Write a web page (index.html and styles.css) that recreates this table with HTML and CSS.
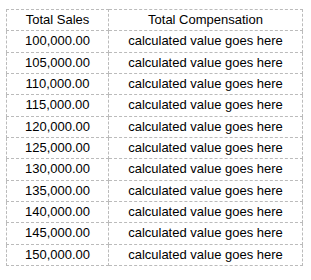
FILE: index.html
```html
<!DOCTYPE html>
<html>
<head>
<meta charset="utf-8">
<link rel="stylesheet" href="styles.css">
</head>
<body>
<table class="grid">
  <thead>
    <tr><th class="c1">Total Sales</th><th class="c2">Total Compensation</th></tr>
  </thead>
  <tbody>
    <tr><td>100,000.00</td><td>calculated value goes here</td></tr>
    <tr><td>105,000.00</td><td>calculated value goes here</td></tr>
    <tr><td>110,000.00</td><td>calculated value goes here</td></tr>
    <tr><td>115,000.00</td><td>calculated value goes here</td></tr>
    <tr><td>120,000.00</td><td>calculated value goes here</td></tr>
    <tr><td>125,000.00</td><td>calculated value goes here</td></tr>
    <tr><td>130,000.00</td><td>calculated value goes here</td></tr>
    <tr><td>135,000.00</td><td>calculated value goes here</td></tr>
    <tr><td>140,000.00</td><td>calculated value goes here</td></tr>
    <tr><td>145,000.00</td><td>calculated value goes here</td></tr>
    <tr><td>150,000.00</td><td>calculated value goes here</td></tr>
  </tbody>
</table>
</body>
</html>
```
FILE: styles.css
```css
html, body { background: #fff; }
body {
  margin: 9px 6px;
  font-family: "Liberation Sans", Arial, sans-serif;
  font-size: 13px;
  color: #000;
}
.grid {
  border-collapse: collapse;
  width: 297px;
  border: 1px dashed #bbb;
}
.grid th, .grid td {
  border: 1px dashed #bbb;
  padding: 2px 4px;
  line-height: 16.33px;
  text-align: center;
  font-weight: normal;
}
.c1 { width: 93px; }
```
